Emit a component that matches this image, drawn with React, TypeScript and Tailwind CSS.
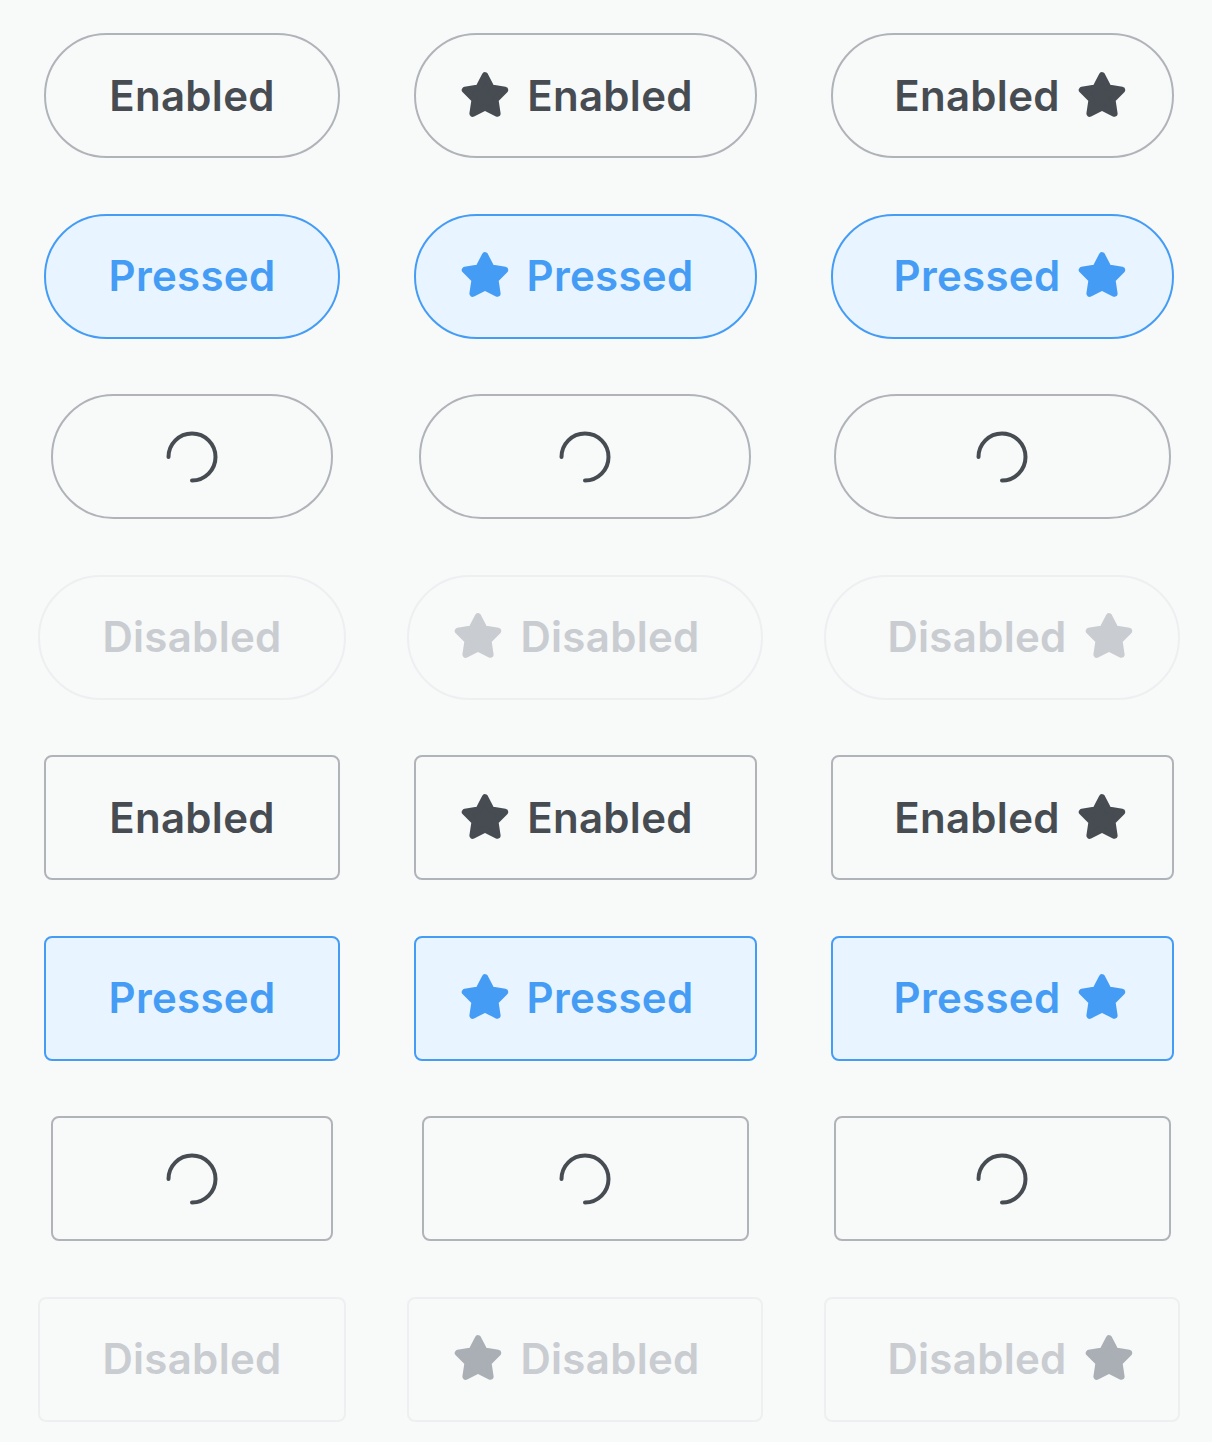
import React from "react";

type Kind = "enabled" | "pressed" | "loading" | "disabled";
type Icon = "none" | "left" | "right";

function Star({ color }: { color: string }) {
  const cx = 24;
  const cy = 24.5;
  const R = 21;
  const r = 10.8;
  const pts: string[] = [];
  for (let i = 0; i < 10; i++) {
    const rad = i % 2 === 0 ? R : r;
    const a = (-90 + i * 36) * (Math.PI / 180);
    pts.push(`${(cx + rad * Math.cos(a)).toFixed(2)},${(cy + rad * Math.sin(a)).toFixed(2)}`);
  }
  return (
    <svg width="48" height="48" viewBox="0 0 48 48" className="shrink-0">
      <polygon
        points={pts.join(" ")}
        fill={color}
        stroke={color}
        strokeWidth="6.5"
        strokeLinejoin="round"
      />
    </svg>
  );
}

function Spinner() {
  return (
    <svg width="54" height="54" viewBox="0 0 54 54">
      <path
        d="M 3.5 27 A 23.5 23.5 0 1 1 27 50.5"
        fill="none"
        stroke="#464c51"
        strokeWidth="4"
        strokeLinecap="round"
      />
    </svg>
  );
}

function Btn({
  kind,
  icon,
  shape,
  width,
}: {
  kind: Kind;
  icon: Icon;
  shape: "pill" | "rect";
  width: number;
}) {
  const radius = shape === "pill" ? "rounded-full" : "rounded-[8px]";
  let cls = "";
  let starColor = "#464c51";
  let label = "";
  if (kind === "enabled") {
    cls = "border-[#b0b4b9] text-[#464c51] bg-transparent";
    label = "Enabled";
  } else if (kind === "pressed") {
    cls = "border-[#459cf5] text-[#459cf5] bg-[#e8f4ff]";
    starColor = "#459cf5";
    label = "Pressed";
  } else if (kind === "loading") {
    cls = "border-[#b0b4b9] bg-transparent";
  } else {
    cls = "border-[#edeff0] text-[#c9ccd0] bg-transparent";
    starColor = shape === "pill" ? "#c9ccd0" : "#a9afb4";
    label = "Disabled";
  }
  let pad = "px-0";
  if (kind !== "loading") {
    if (icon === "left") pad = "pl-[46px] pr-[62px]";
    else if (icon === "right") pad = "pl-[62px] pr-[46px]";
  }
  return (
    <div
      className={`h-[125px] border-2 ${radius} ${cls} flex items-center justify-center gap-[18px] ${pad}`}
      style={{ width }}
    >
      {kind === "loading" ? (
        <Spinner />
      ) : (
        <>
          {icon === "left" && <Star color={starColor} />}
          <span className="text-[42px] font-semibold leading-none tracking-[0.3px] whitespace-nowrap">
            {label}
          </span>
          {icon === "right" && <Star color={starColor} />}
        </>
      )}
    </div>
  );
}

const widths: Record<Kind, number[]> = {
  enabled: [296, 343, 343],
  pressed: [296, 343, 343],
  loading: [282, 332, 337],
  disabled: [308, 356, 356],
};

export default function App() {
  const kinds: Kind[] = ["enabled", "pressed", "loading", "disabled"];
  const icons: Icon[] = ["none", "left", "right"];
  const rows: { kind: Kind; shape: "pill" | "rect" }[] = [];
  (["pill", "rect"] as const).forEach((shape) => kinds.forEach((kind) => rows.push({ kind, shape })));
  return (
    <div
      className="min-h-[1442px] w-[1212px] bg-[#f8f9f9] pt-[33px] pl-[38px]"
      style={{ fontFamily: "Inter, 'Noto Sans', sans-serif" }}
    >
      <div className="grid grid-cols-[308px_356px_356px] gap-x-[61px] gap-y-[55.5px] justify-items-center">
        {rows.map((row, ri) =>
          icons.map((icon, ci) => {
            let w = widths[row.kind][ci];
            if (row.shape === "rect" && row.kind === "loading" && ci === 1) w = 327;
            return <Btn key={`${ri}-${ci}`} kind={row.kind} icon={icon} shape={row.shape} width={w} />;
          })
        )}
      </div>
    </div>
  );
}
